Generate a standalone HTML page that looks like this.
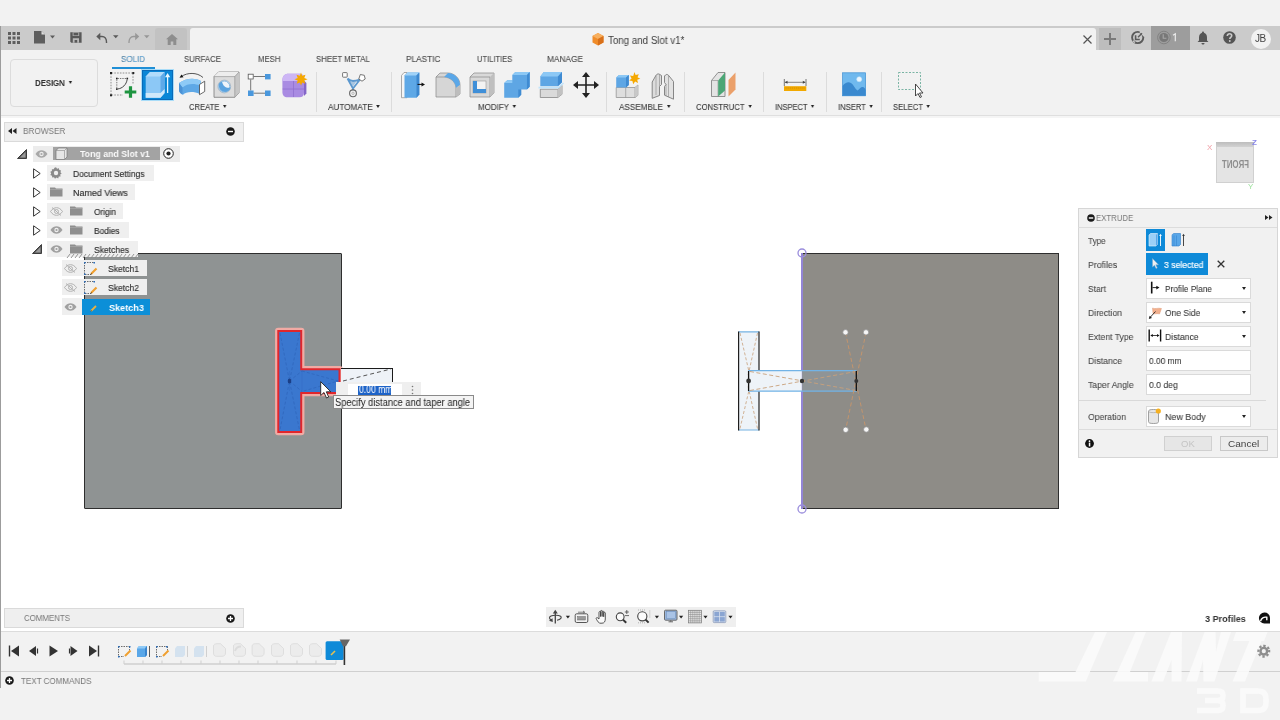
<!DOCTYPE html>
<html><head><meta charset="utf-8">
<style>
*{margin:0;padding:0;box-sizing:border-box}
html,body{width:1280px;height:720px;overflow:hidden;background:#fff;font-family:"Liberation Sans",sans-serif;color:#333}
.a{position:absolute}
.t{position:absolute;white-space:nowrap;line-height:1;will-change:transform}
svg{position:absolute;overflow:visible}
.tab{font-size:9px;color:#4a4a4a;top:55px;-webkit-text-stroke:0.1px #4a4a4a}
.lbl{font-size:9px;color:#3a3a3a;top:103px;-webkit-text-stroke:0.1px #3a3a3a}
.sep{position:absolute;top:72px;width:1px;height:40px;background:#dcdcdc}
.dd{display:inline-block;width:0;height:0;border-left:2.5px solid transparent;border-right:2.5px solid transparent;border-top:3px solid #222;vertical-align:middle;margin-left:4px;position:relative;top:-1px}
.row{position:absolute;height:16px;background:#ececec}
.tl{font-size:9px;color:#2e2e2e;-webkit-text-stroke:0.15px #2e2e2e}
.pl{font-size:9.7px;color:#4a4a4a;-webkit-text-stroke:0.1px #4a4a4a}
.inp{position:absolute;left:1146px;width:105px;height:21px;background:#fff;border:1px solid #dadada}
</style></head><body>
<!-- window top -->
<div class="a" style="left:0;top:0;width:1280px;height:26px;background:#f2f2f2"></div>
<div class="a" style="left:0;top:26px;width:1280px;height:24px;background:#cbcbcb"></div>
<div class="a" style="left:155px;top:28px;width:32px;height:22px;background:#c2c2c2;border-radius:3px 3px 0 0"></div>
<div class="a" style="left:190px;top:28px;width:906px;height:22px;background:#f2f2f2;border-radius:3px 3px 0 0"></div>
<div class="a" style="left:1099px;top:28px;width:22px;height:22px;background:#bdbdbd"></div>
<div class="a" style="left:1151px;top:26px;width:39px;height:24px;background:#9d9d9d"></div>
<!-- toolbar -->
<div class="a" style="left:0;top:50px;width:1280px;height:66px;background:#f2f2f2;border-bottom:1px solid #dfdfdf"></div>
<div class="a" style="left:0;top:116px;width:1280px;height:2px;background:#f5f5f5"></div>
<!-- left border -->
<div class="a" style="left:0;top:26px;width:1.2px;height:662px;background:#9c9c9c"></div>
<!-- grid icon -->
<svg style="left:8px;top:32px" width="12" height="12" viewBox="0 0 12 12">
<g fill="#5e5e5e"><rect x="0" y="0" width="3" height="3"/><rect x="4.5" y="0" width="3" height="3"/><rect x="9" y="0" width="3" height="3"/>
<rect x="0" y="4.5" width="3" height="3"/><rect x="4.5" y="4.5" width="3" height="3"/><rect x="9" y="4.5" width="3" height="3"/>
<rect x="0" y="9" width="3" height="3"/><rect x="4.5" y="9" width="3" height="3"/><rect x="9" y="9" width="3" height="3"/></g></svg>
<!-- file icon -->
<svg style="left:34px;top:31px" width="24" height="13" viewBox="0 0 24 13">
<path d="M0 0H7.5L11 3.5V12.5H0Z" fill="#5e5e5e"/><path d="M7.5 0L11 3.5H7.5Z" fill="#e0e0e0"/>
<path d="M16 4.5H21L18.5 7.5Z" fill="#5e5e5e"/></svg>
<!-- save -->
<svg style="left:70px;top:32px" width="12" height="11" viewBox="0 0 12 11">
<path d="M0.3 0.2H11.6V10.8H1.3L0.3 9.8Z" fill="#585858"/><rect x="2.6" y="0.2" width="6.6" height="3.8" fill="#a9a9a9"/><rect x="3.6" y="0.9" width="4.6" height="2.4" fill="#585858"/>
<path d="M2.8 10.8V6.2H9V10.8H7.2V8H4.6V10.8Z" fill="#b9b9b9"/></svg>
<!-- undo -->
<svg style="left:96px;top:32px" width="24" height="12" viewBox="0 0 24 12">
<path d="M2.5 4.5H6C8.8 4.5 10.5 6.8 10.5 10V11" fill="none" stroke="#5a5a5a" stroke-width="1.4"/><path d="M0.3 4.5L4.3 0.8V8.2Z" fill="#5a5a5a"/>
<path d="M17 3.2H22.5L19.75 6.2Z" fill="#5a5a5a"/></svg>
<!-- redo -->
<svg style="left:128px;top:32px" width="24" height="12" viewBox="0 0 24 12">
<path d="M9 4.5H5.5C2.7 4.5 1 6.8 1 10V11" fill="none" stroke="#979797" stroke-width="1.3"/><path d="M11.2 4.5L7.2 0.8V8.2Z" fill="#979797"/>
<path d="M16 3.2H21.5L18.75 6.2Z" fill="#979797"/></svg>
<!-- home -->
<svg style="left:166px;top:34px" width="12" height="11" viewBox="0 0 12 11">
<path d="M6 0L12 5.3H10.3V11H7.3V7.5H4.7V11H1.7V5.3H0Z" fill="#8e8e8e"/></svg>
<!-- title -->
<svg style="left:592px;top:33px" width="12" height="13" viewBox="0 0 12 13">
<path d="M6 0L11.5 3V9.5L6 12.5L0.5 9.5V3Z" fill="#f08c2a"/><path d="M6 0L11.5 3L6 6L0.5 3Z" fill="#f7b060"/><path d="M6 6L11.5 3V9.5L6 12.5Z" fill="#d8701a"/></svg>
<div class="t" style="transform:scaleX(0.9744);transform-origin:0 0;left:608.00px;top:36px;font-size:10px;color:#3c3c3c">Tong and Slot v1*</div>
<!-- close x -->
<svg style="left:1083px;top:35px" width="9" height="9" viewBox="0 0 9 9"><path d="M0.5 0.5L8.5 8.5M8.5 0.5L0.5 8.5" stroke="#555" stroke-width="1.2"/></svg>
<!-- plus -->
<svg style="left:1104px;top:33px" width="12" height="12" viewBox="0 0 12 12"><path d="M6 0V12M0 6H12" stroke="#7a7a7a" stroke-width="2"/></svg>
<!-- refresh/jobs -->
<svg style="left:1129px;top:29px" width="18" height="18" viewBox="1129 29 18 18"><circle cx="1137.7" cy="37.5" r="5.6" fill="none" stroke="#5a5a5a" stroke-width="1.9"/><path d="M1140.2 31.2L1145 36" stroke="#cdcdcd" stroke-width="2.6"/><path d="M1133 40.6L1134.8 42.6" stroke="#cdcdcd" stroke-width="1.4"/><path d="M1142 33.2L1138 37.2" stroke="#5a5a5a" stroke-width="1.5"/><path d="M1135.6 35.3V39.5H1139.8" fill="none" stroke="#5a5a5a" stroke-width="1.6"/></svg>
<!-- clock -->
<svg style="left:1155px;top:29px" width="18" height="18" viewBox="1155 29 18 18"><circle cx="1163.9" cy="37.5" r="6.3" fill="none" stroke="#838383" stroke-width="1"/><circle cx="1163.9" cy="37.5" r="4.6" fill="#787878"/><path d="M1163.2 34.3V38.2H1166.4" fill="none" stroke="#a8a8a8" stroke-width="1.1"/></svg>
<svg style="left:1172px;top:33px" width="6" height="9" viewBox="0 0 6 9"><path d="M1 2.2L3.3 0.8V8.2" fill="none" stroke="#ececec" stroke-width="1.2"/></svg>
<!-- bell -->
<svg style="left:1197px;top:31px" width="12" height="14" viewBox="0 0 12 14"><path d="M6 0.5C6.8 0.5 7 1.2 7 1.8C9 2.4 10 4 10 6.5V9.5L11.5 11H0.5L2 9.5V6.5C2 4 3 2.4 5 1.8C5 1.2 5.2 0.5 6 0.5Z" fill="#555"/><path d="M4.5 12H7.5C7.5 13 6.8 13.5 6 13.5C5.2 13.5 4.5 13 4.5 12Z" fill="#555"/></svg>
<!-- help -->
<svg style="left:1223px;top:31px" width="13" height="13" viewBox="0 0 13 13"><circle cx="6.5" cy="6.5" r="6.3" fill="#555"/><path d="M4.3 5C4.3 3.6 5.3 2.8 6.5 2.8C7.8 2.8 8.7 3.6 8.7 4.8C8.7 6.3 6.8 6.4 6.8 7.9" fill="none" stroke="#cbcbcb" stroke-width="1.6"/><circle cx="6.8" cy="10" r="0.95" fill="#cbcbcb"/></svg>
<!-- JB -->
<div class="a" style="left:1251px;top:29px;width:20px;height:20px;border-radius:50%;background:#f2f2f2"></div>
<div class="t" style="left:1255px;top:34px;font-size:10px;color:#444;letter-spacing:-0.5px">JB</div>

<!-- DESIGN -->
<div class="a" style="left:10px;top:59px;width:88px;height:48px;border:1px solid #dcdcdc;border-radius:4px;background:#f2f2f2"></div>
<div class="t" style="transform:scaleX(0.8429);transform-origin:0 0;left:35.00px;top:78px;font-size:9.5px;font-weight:bold;color:#333;letter-spacing:-0.2px">DESIGN<span class="dd" style="margin-left:5px"></span></div>
<!-- tabs -->
<div class="t tab" style="transform:scaleX(0.8889);transform-origin:0 0;left:121.00px;color:#5aa3d6">SOLID</div>
<div class="a" style="left:112px;top:67px;width:43px;height:2px;background:#1f8fd6"></div>
<div class="t tab" style="transform:scaleX(0.8690);transform-origin:0 0;left:183.50px">SURFACE</div>
<div class="t tab" style="transform:scaleX(0.8654);transform-origin:0 0;left:257.50px">MESH</div>
<div class="t tab" style="transform:scaleX(0.8710);transform-origin:0 0;left:316.00px">SHEET METAL</div>
<div class="t tab" style="transform:scaleX(0.9189);transform-origin:0 0;left:406.00px">PLASTIC</div>
<div class="t tab" style="transform:scaleX(0.8393);transform-origin:0 0;left:476.75px">UTILITIES</div>
<div class="t tab" style="transform:scaleX(0.9231);transform-origin:0 0;left:547.00px">MANAGE</div>
<!-- group labels -->
<div class="t lbl" style="transform:scaleX(0.8500);transform-origin:0 0;left:189.00px">CREATE<span class="dd"></span></div>
<div class="t lbl" style="transform:scaleX(0.9082);transform-origin:0 0;left:328.00px">AUTOMATE<span class="dd"></span></div>
<div class="t lbl" style="transform:scaleX(0.8857);transform-origin:0 0;left:478.00px">MODIFY<span class="dd"></span></div>
<div class="t lbl" style="transform:scaleX(0.9042);transform-origin:0 0;left:619.10px">ASSEMBLE<span class="dd"></span></div>
<div class="t lbl" style="transform:scaleX(0.8596);transform-origin:0 0;left:695.50px">CONSTRUCT<span class="dd"></span></div>
<div class="t lbl" style="transform:scaleX(0.8333);transform-origin:0 0;left:774.50px">INSPECT<span class="dd"></span></div>
<div class="t lbl" style="transform:scaleX(0.8485);transform-origin:0 0;left:837.50px">INSERT<span class="dd"></span></div>
<div class="t lbl" style="transform:scaleX(0.8571);transform-origin:0 0;left:893.00px">SELECT<span class="dd"></span></div>
<!-- separators -->
<div class="sep" style="left:316px"></div>
<div class="sep" style="left:391px"></div>
<div class="sep" style="left:606px"></div>
<div class="sep" style="left:684px"></div>
<div class="sep" style="left:763px"></div>
<div class="sep" style="left:826px"></div>
<div class="sep" style="left:881px"></div>
<!-- icons -->
<!-- sketch -->
<svg style="left:110px;top:72px" width="26" height="25" viewBox="0 0 26 25">
<path d="M1.5 1H23.5M1 1.5V23M1.5 23H13M23 1.5V12" fill="none" stroke="#666" stroke-width="0.7" stroke-dasharray="1.6 1.2"/>
<g fill="#222"><rect x="0" y="0" width="2" height="2"/><rect x="22.3" y="0" width="2" height="2"/><rect x="0" y="22.3" width="2" height="2"/>
<rect x="6" y="5.7" width="1.6" height="1.6"/><rect x="16.5" y="5.7" width="1.6" height="1.6"/><rect x="6" y="16.3" width="1.6" height="1.6"/></g>
<path d="M7.5 6.5H16.5M6.8 7.5V16.3" fill="none" stroke="#444" stroke-width="0.7" stroke-dasharray="1.4 1"/>
<path d="M7.5 17C12.5 16.5 16.5 12.5 17.2 7.3" fill="none" stroke="#333" stroke-width="0.9"/>
<path d="M20.5 14.2V25.8M14.7 20H26.3" stroke="#1e9440" stroke-width="3.2"/></svg>
<!-- extrude (active) -->
<div class="a" style="left:142px;top:69.5px;width:31px;height:30.5px;background:#0a86d6;border:1.2px solid #0b6ab8;box-shadow:0 0 0 1px #a8dcf8"></div>
<svg style="left:140px;top:66px" width="36" height="36" viewBox="140 66 36 36">
<path d="M145.7 76.5L150 72H164.6V93L160.5 97.7H145.7Z" fill="#8cc8f6"/>
<path d="M145.7 76.5L150 72H164.6L160.5 76.5Z" fill="#b2dcfb"/>
<path d="M160.5 76.5L164.6 72V93L160.5 97.7Z" fill="#5ea9e8"/>
<path d="M145.7 93H160.5L164.6 89V93L160.5 97.7H145.7Z" fill="#cfe8fa"/>
<path d="M167.6 93V76" stroke="#e8f6ff" stroke-width="1.3"/><path d="M167.6 73L165 77.3H170.2Z" fill="#e8f6ff"/>
</svg>
<!-- revolve -->
<svg style="left:176px;top:70px" width="32" height="28" viewBox="176 70 32 28">
<path d="M181.5 76.5C187 72.5 197 72 203 77.5" fill="none" stroke="#444" stroke-width="0.9"/><path d="M179.5 77.8L181.5 74.5L183.5 77.2Z" fill="#111"/>
<path d="M179 83C186 78 195 77.5 201 81L199.5 94C194 91 186 91.5 183 94.7C180.5 93.5 179 92 179 90Z" fill="#5ea8e6"/>
<path d="M179 83C186 78 195 77.5 201 81L200 85.5C194 83 187 83.5 182.5 87.5Z" fill="#8ecaf6"/>
<path d="M179 83L182.5 87.5V94.7C180.5 93.5 179 92 179 90Z" fill="#4b92d6"/>
<path d="M199.5 84.5L204.7 81.2V91.5L199.5 94.7Z" fill="#fff" stroke="#444" stroke-width="0.8"/>
</svg>
<!-- hole -->
<svg style="left:210px;top:70px" width="32" height="30" viewBox="210 70 32 30">
<path d="M214 76.6L218.5 72H239V92.8L234.8 97.3H214Z" fill="#dcdcdc" stroke="#7a7a7a" stroke-width="0.8"/>
<path d="M214 76.6L218.5 72H239L234.8 76.6Z" fill="#ededed"/>
<path d="M234.8 76.6L239 72V92.8L234.8 97.3Z" fill="#c6c6c6"/>
<path d="M214 76.6H234.8V97.3M234.8 76.6L239 72" fill="none" stroke="#8a8a8a" stroke-width="0.6"/>
<circle cx="224.3" cy="86.5" r="6.4" fill="#eef4fa" stroke="#9aaabb" stroke-width="0.7"/>
<path d="M218.8 84.5C218.5 89 221.5 92 225 92C228.5 92 230.3 89.8 230.5 87.5C227 88.5 223 87 222 81.5C220 82 219 83 218.8 84.5Z" fill="#5aa3e0"/>
<circle cx="224.3" cy="86.5" r="5.5" fill="none" stroke="#6aa9dc" stroke-width="0.8"/>
</svg>
<!-- rect pattern -->
<svg style="left:247px;top:73px" width="25" height="25" viewBox="0 0 25 25">
<path d="M6.5 3.5H18M3.7 6.5V17.5M6.5 20.2H18" stroke="#555" stroke-width="0.8"/>
<rect x="1.2" y="1.2" width="5" height="4.8" fill="#fff" stroke="#555" stroke-width="0.8"/>
<rect x="18" y="1" width="5.6" height="5.4" fill="#4a98dd"/><rect x="1" y="17.5" width="5.6" height="5.5" fill="#4a98dd"/><rect x="18" y="17.5" width="5.6" height="5.5" fill="#4a98dd"/></svg>
<!-- form -->
<svg style="left:280px;top:70px" width="32" height="30" viewBox="280 70 32 30">
<path d="M282.4 80C282.4 76 284.5 73.7 288.5 73.7H299C302.5 73.7 304 75.5 304 79V93C304 95.8 302.2 97.3 299.5 97.3H287.5C284.2 97.3 282.4 95.3 282.4 92Z" fill="#a98be2"/>
<path d="M282.4 80C282.4 76 284.5 73.7 288.5 73.7H299C302.5 73.7 304 75.5 304 79V81H282.4Z" fill="#cdb6f5"/>
<path d="M293.5 81V97M282.6 89H304" stroke="#9070d0" stroke-width="0.8"/>
<path d="M304 80.5L306.4 83V93.5L304 96Z" fill="#8566c8"/>
<path d="M301 72.5L302.2 75.8L305.5 74.8L304.3 78L307.6 79.3L304.3 80.5L305.3 83.8L302.2 82.6L301 85.8L299.8 82.6L296.7 83.8L297.7 80.5L294.4 79.3L297.7 78L296.5 74.8L299.8 75.8Z" fill="#f5a800"/>
</svg>
<!-- automate -->
<svg style="left:338px;top:68px" width="32" height="32" viewBox="338 68 32 32">
<path d="M347.5 78.5C350 80.5 351 81 353 81C355 81 357 80.5 360 79.5M347.5 78.5L353 88.5L360 79.5M353 88.5V91" fill="none" stroke="#5b98cf" stroke-width="1.8" stroke-linejoin="round"/>
<path d="M350 81.5L356.5 81.2L353 86.5Z" fill="#5b98cf" opacity="0.5"/>
<rect x="342.6" y="72.6" width="4.6" height="4.6" rx="0.6" fill="#fff" stroke="#666" stroke-width="0.9"/>
<path d="M360.3 74.5L364.3 75.3L365.2 79L362 81.2L358.8 79Z" fill="#fff" stroke="#666" stroke-width="0.9"/>
<circle cx="353" cy="93.3" r="3.4" fill="#f2f2f2" stroke="#666" stroke-width="1.1"/><circle cx="353" cy="93.3" r="1.2" fill="none" stroke="#888" stroke-width="0.5"/>
</svg>
<!-- press pull -->
<svg style="left:398px;top:68px" width="30" height="32" viewBox="398 68 30 32">
<path d="M401.5 75.5L404 72.5H407V97.7H401.5Z" fill="#f5f5f5" stroke="#8a8a8a" stroke-width="0.7"/>
<path d="M404.5 75.5L407.5 72.5H419.3V94.5L416.5 97.7H404.5Z" fill="#5ea8e6"/>
<path d="M404.5 75.5L407.5 72.5H419.3L416.5 75.5Z" fill="#9fd2f8"/>
<path d="M416.5 75.5L419.3 72.5V94.5L416.5 97.7Z" fill="#3d88cf"/>
<path d="M417.5 84.4H422" stroke="#111" stroke-width="1"/><path d="M425 84.4L421.5 82.4V86.4Z" fill="#111"/>
</svg>
<!-- fillet -->
<svg style="left:435px;top:72px" width="27" height="26" viewBox="0 0 27 26">
<path d="M1 5L5 1H13C19 1 25 6 25 13V22L21 25H1Z" fill="#d6d6d6" stroke="#888" stroke-width="0.7"/>
<path d="M1 5H9C15 5 21 10 21 16V25" fill="none" stroke="#888" stroke-width="0.7"/>
<path d="M9 5C15 5 21 10 21 16L25 13C25 6 19 1 13 1Z" fill="#5aa7e8"/><path d="M21 16V25L25 22V13Z" fill="#bdbdbd"/></svg>
<!-- shell -->
<svg style="left:469px;top:72px" width="27" height="26" viewBox="0 0 27 26">
<path d="M1 5L5 1H25V21L21 25H1Z" fill="#d9d9d9" stroke="#888" stroke-width="0.7"/><path d="M1 5H21V25" fill="none" stroke="#888" stroke-width="0.7"/>
<path d="M21 5L25 1V21L21 25Z" fill="#bfbfbf"/>
<rect x="4" y="9" width="13" height="12" fill="#f3f3f3" stroke="#999" stroke-width="0.6"/>
<path d="M4 9H8V17H17V21H4Z" fill="#3f8fd8"/></svg>
<!-- combine -->
<svg style="left:502px;top:70px" width="30" height="30" viewBox="502 70 30 30">
<path d="M504.2 83L507.3 80.2H512.3V75L515.3 72.1H529.7V86.7L526.9 89.5H521.2V94.7L518.3 97.7H504.2Z" fill="#5ea6e4"/>
<path d="M512.3 75L515.3 72.1H529.7L527 75Z" fill="#8cc8f5"/><path d="M504.2 83L507.3 80.2H512.3V83Z" fill="#8cc8f5"/>
<path d="M527 75L529.7 72.1V86.7L526.9 89.5Z" fill="#3f8bd2"/><path d="M518.3 89.5H521.2V94.7L518.3 97.7Z" fill="#3f8bd2"/>
</svg>
<!-- split -->
<svg style="left:536px;top:70px" width="30" height="30" viewBox="536 70 30 30">
<path d="M540.3 89.2H557.8L562 85.3V94.3L557.8 97.5H540.3Z" fill="#dadada" stroke="#7a7a7a" stroke-width="0.7"/><path d="M557.8 89.2V97.5" stroke="#9a9a9a" stroke-width="0.6"/><path d="M557.8 89.2L562 85.3V94.3L557.8 97.5Z" fill="#c2c2c2"/>
<path d="M540.3 76.5L543.8 72.1H562V82.3L557.8 86.2H540.3Z" fill="#5ea6e4"/><path d="M540.3 76.5L543.8 72.1H562L558 76.5Z" fill="#8cc8f5"/><path d="M558 76.5L562 72.1V82.3L557.8 86.2Z" fill="#3f8bd2"/>
<path d="M538.5 87.6H558.3L563.5 83" fill="none" stroke="#bfe3fb" stroke-width="1.6"/>
</svg>
<!-- move -->
<svg style="left:573px;top:72px" width="26" height="26" viewBox="0 0 26 26">
<path d="M13 3V23M3 13H23" stroke="#222" stroke-width="1.6"/>
<path d="M13 0L9 5H17ZM13 26L9 21H17ZM0 13L5 9V17ZM26 13L21 9V17Z" fill="#222"/></svg>
<!-- new component -->
<svg style="left:612px;top:70px" width="32" height="30" viewBox="612 70 32 30">
<path d="M616.2 87.5H635L637.9 85V95.3L635.2 97.5H616.2Z" fill="#dedede" stroke="#8a8a8a" stroke-width="0.7"/><path d="M625.7 87.5V97.5M635 87.5V97.5" stroke="#8a8a8a" stroke-width="0.6"/><path d="M635 87.5L637.9 85V95.3L635.2 97.5Z" fill="#c8c8c8"/>
<path d="M616.2 77.5L619 75H628.8V85L626 87.5H616.2Z" fill="#5ea6e4"/><path d="M616.2 77.5L619 75H628.8L626 77.5Z" fill="#8cc8f5"/><path d="M626 77.5L628.8 75V85L626 87.5Z" fill="#3f8bd2"/>
<path d="M634.5 72L635.6 75L638.8 74.2L637.5 77.2L640.3 78.8L637.2 79.8L638 83L635.1 81.5L633.2 84.2L632.4 81L629.2 80.6L631.6 78.5L630 75.6L633.2 76Z" fill="#f5a800"/>
</svg>
<!-- joint -->
<svg style="left:650px;top:70px" width="28" height="30" viewBox="650 70 28 30">
<path d="M652.2 82L656 75.3C656.8 74 658.5 73.5 659.5 74.3L661.5 75.5V84.5L659.5 86.5V95.5L652.2 98.3Z" fill="#dcdcdc" stroke="#7a7a7a" stroke-width="0.9" stroke-linejoin="round"/>
<path d="M656 75.3V95M659.5 74.3V86.5" stroke="#8a8a8a" stroke-width="0.6"/>
<path d="M673.5 81.5L668.5 75.3C667.6 74.3 666.3 74.2 665.5 75L664.5 76V82.5L666 84.5L664.5 86.5V95.2L673.5 99.2Z" fill="#e2e2e2" stroke="#7a7a7a" stroke-width="0.9" stroke-linejoin="round"/>
<path d="M668.5 75.3V97M666 84.5V96" stroke="#8a8a8a" stroke-width="0.6"/>
</svg>
<!-- construct -->
<svg style="left:708px;top:70px" width="30" height="30" viewBox="708 70 30 30">
<path d="M711.5 80.5L718 72.5H725V96.5H711.5Z" fill="#e4e4e4" stroke="#7a7a7a" stroke-width="0.8"/>
<path d="M711.5 80.5H718V96.5" fill="none" stroke="#8a8a8a" stroke-width="0.6"/>
<path d="M718.2 80.5L725 72.5V90.5L718.2 96.5Z" fill="#4ca676"/>
<path d="M728.5 80L735.5 72.5V89.5L728.5 96.5Z" fill="#eba06a"/>
</svg>
<!-- inspect -->
<svg style="left:782px;top:78px" width="26" height="16" viewBox="782 78 26 16">
<path d="M784.3 79V86M806 79V86" stroke="#666" stroke-width="0.9"/><path d="M785 82.3H805.3" stroke="#777" stroke-width="0.9"/>
<path d="M784.8 82.3L787.5 80.8V83.8ZM805.5 82.3L802.8 80.8V83.8Z" fill="#444"/>
<rect x="784" y="86.2" width="22.3" height="4.8" fill="#f2a900"/><path d="M785.5 88H805" stroke="#c27f00" stroke-width="0.6" stroke-dasharray="1.2 0.9"/></svg>
<!-- insert -->
<svg style="left:840px;top:70px" width="28" height="28" viewBox="840 70 28 28">
<rect x="842.6" y="72.8" width="23" height="23" fill="#70b9ee" stroke="#3f8fd2" stroke-width="0.7"/>
<path d="M842.6 95.8V86C845 82.5 848.5 81.5 851 83C853.5 84.5 855 89 857.5 90.5C859.5 89 861 86.5 863 87C864.5 87.5 865.3 89 865.6 90V95.8Z" fill="#3a89cf"/>
<circle cx="859.2" cy="79.2" r="2.5" fill="#eaf6ff" stroke="#bfe0f7" stroke-width="0.5"/>
</svg>
<!-- select -->
<svg style="left:898px;top:72px" width="27" height="26" viewBox="0 0 27 26">
<rect x="0.5" y="0.5" width="22" height="17" fill="none" stroke="#5aa38f" stroke-width="0.8" stroke-dasharray="2 1.5"/>
<path d="M17.5 12V24L20 21.5L22 25.5L23.5 24.8L21.5 21H25Z" fill="#fff" stroke="#333" stroke-width="0.9"/></svg>

<!-- left body -->
<div class="a" style="left:84px;top:253px;width:258px;height:256px;background:#8f9393;border:1.5px solid #2e2e2e;border-radius:1px"></div>
<!-- right body -->
<div class="a" style="left:802px;top:253px;width:257px;height:256px;background:#8e8c87;border:1.5px solid #2e2e2e;border-left:none"></div>
<div class="a" style="left:801px;top:253px;width:1.5px;height:256px;background:#9385d6"></div>
<svg style="left:796px;top:247px" width="12" height="12" viewBox="0 0 12 12"><circle cx="6" cy="6" r="4" fill="none" stroke="#9a8ddc" stroke-width="1.3"/></svg>
<svg style="left:796px;top:503px" width="12" height="12" viewBox="0 0 12 12"><circle cx="6" cy="6" r="4" fill="none" stroke="#9a8ddc" stroke-width="1.3"/></svg>
<!-- T profile -->
<svg style="left:270px;top:322px" width="80" height="120" viewBox="270 322 80 120">
<path d="M278.3 331H301.2V369.3H339.5V393.1H301.2V432H278.3Z" fill="#3a77cf" stroke="#f1aaa4" stroke-width="6.5" stroke-linejoin="round"/>
<path d="M278.3 331H301.2V369.3H339.5V393.1H301.2V432H278.3Z" fill="#3a77cf" stroke="#e0262c" stroke-width="2"/>
<g stroke="#2a5cb0" stroke-width="0.7" stroke-dasharray="3 2" fill="none" opacity="0.7">
<path d="M280 333L289.5 381L280 430M299.5 333L289.5 381L299.5 430"/>
<path d="M302 371L338 381L302 391.5M289.5 381L302 371M289.5 381L302 391.5"/>
</g>
<path d="M289.5 371V391M302 370.5V392" stroke="#3068bf" stroke-width="0.8" opacity="0.5"/>
<ellipse cx="289.5" cy="381" rx="1.8" ry="2.6" fill="#1b3f86"/>
</svg>
<!-- preview box -->
<div class="a" style="left:341px;top:367.5px;width:52px;height:28px;background:#eef2f7;border-top:1.3px solid #1b1b1b;border-right:1.3px solid #1b1b1b"></div>
<svg style="left:340px;top:366px" width="55" height="20" viewBox="340 366 55 20"><path d="M343 381L391 369" stroke="#555" stroke-width="1" stroke-dasharray="4 3"/></svg>
<!-- input widget -->
<div class="a" style="left:336px;top:382px;width:85px;height:13px;background:#efefef"></div>
<div class="a" style="left:347.5px;top:383.5px;width:54px;height:12px;background:#fff"></div>
<div class="a" style="left:358px;top:385.5px;width:33px;height:9.5px;background:#1d63c8"></div>
<div class="a" style="left:358.5px;top:384.5px;font-size:10px;line-height:1;white-space:nowrap;color:#fff;transform:scaleX(0.86);transform-origin:0 0;will-change:transform">0.00 mm</div>
<svg style="left:411px;top:385px" width="3" height="10" viewBox="0 0 3 10"><circle cx="1.5" cy="1.5" r="0.8" fill="#777"/><circle cx="1.5" cy="5" r="0.8" fill="#777"/><circle cx="1.5" cy="8.5" r="0.8" fill="#777"/></svg>
<!-- cursor -->
<svg style="left:320px;top:381px" width="12" height="18" viewBox="0 0 12 18"><path d="M0.7 0.7V14.5L4 11.5L6.5 17L8.7 16L6.3 10.8H10.8Z" fill="#fff" stroke="#222" stroke-width="0.9"/></svg>
<!-- tooltip -->
<div class="a" style="left:333px;top:394.5px;width:141px;height:14px;background:#f4f4f4;border:1px solid #8a8a8a"></div>
<div class="t" style="transform:scaleX(0.9310);transform-origin:0 0;left:335.13px;top:398px;font-size:10px;color:#222">Specify distance and taper angle</div>
<!-- right sketch -->
<svg style="left:730px;top:320px" width="150" height="120" viewBox="730 320 150 120">
<rect x="738.6" y="331.8" width="20.4" height="98" fill="#eef3f8"/>
<path d="M738.5 331.8H759.2M738.5 430H759.2" stroke="#74b2e2" stroke-width="1.2"/>
<path d="M738.6 331.5V430.5M759 331.5V430.5" stroke="#1e1e1e" stroke-width="1.2"/>
<path d="M740 333L750 376M757.5 333L748 376M740 428.5L750 386M757.5 428.5L748 386" stroke="#c8a07a" stroke-width="0.8" stroke-dasharray="3 2"/>
<rect x="748.3" y="370.5" width="53.5" height="20.8" fill="#eef3f8"/>
<rect x="802" y="370.5" width="54.5" height="20.8" fill="#8f9598" opacity="0.9"/>
<path d="M748.3 370.6H856.5M748.3 391.2H856.5" stroke="#72b3e6" stroke-width="1.3"/>
<path d="M750 371.5L856 390.5M750 390.5L856 371.5" stroke="#c8a07a" stroke-width="0.9" stroke-dasharray="4 2.5"/>
<path d="M845.5 332.5L866 429.5M866 332.5L845.7 429.5" stroke="#c8956a" stroke-width="0.9" stroke-dasharray="4 2.5"/>
<path d="M748.6 371V391M856.3 371V391" stroke="#111" stroke-width="1.3"/>
<circle cx="748.6" cy="381" r="2.4" fill="#333"/>
<circle cx="802" cy="381" r="2.2" fill="#333"/>
<circle cx="856.3" cy="381" r="2" fill="#333"/>
<g fill="#f6f6f6" stroke="#8a8a8a" stroke-width="0.7"><circle cx="845.5" cy="332.3" r="2.7"/><circle cx="866" cy="332.3" r="2.7"/><circle cx="845.7" cy="429.8" r="2.7"/><circle cx="866.3" cy="429.5" r="2.7"/></g>
</svg>
<!-- view cube -->
<div class="a" style="left:1216px;top:142px;width:38px;height:41px;background:#e4e4e4;border:1px solid #d0d0d0"></div>
<div class="a" style="left:1216px;top:142px;width:38px;height:4.5px;background:linear-gradient(#bdbdbd,#d2d2d2)"></div>
<svg style="left:1216px;top:142px;will-change:transform" width="38" height="41" viewBox="0 0 38 41"><text x="-19.5" y="26" transform="scale(-1,1)" text-anchor="middle" font-family="Liberation Sans" font-weight="bold" font-size="10" fill="#8e8e8e" textLength="27" lengthAdjust="spacingAndGlyphs">FRONT</text></svg>
<div class="t" style="left:1207px;top:144px;font-size:8px;color:#f0a0a8">X</div>
<div class="t" style="left:1252px;top:139px;font-size:8px;font-weight:bold;color:#8a88e8">Z</div>
<div class="t" style="left:1248px;top:183px;font-size:8px;color:#9be09b">Y</div>

<!-- browser header -->
<div class="a" style="left:4px;top:122px;width:240px;height:20px;background:#efefef;border:1px solid #dadada"></div>
<svg style="left:8px;top:128px" width="9" height="6" viewBox="0 0 9 6"><path d="M0 3L4 0V6ZM4.5 3L8.5 0V6Z" fill="#222"/></svg>
<div class="t" style="transform:scaleX(0.9111);transform-origin:0 0;left:23.09px;top:127px;font-size:9px;color:#777">BROWSER</div>
<svg style="left:226px;top:127px" width="9" height="9" viewBox="0 0 9 9"><circle cx="4.5" cy="4.5" r="4.3" fill="#1a1a1a"/><rect x="2" y="3.8" width="5" height="1.4" fill="#fff"/></svg>
<!-- row: root -->
<div class="row" style="left:33px;top:146px;width:147px;height:16px;background:#ececec"></div>
<svg style="left:17px;top:149px" width="10" height="10" viewBox="0 0 10 10"><path d="M0.5 9.5L9.5 0.5V9.5Z" fill="#555" stroke="#222" stroke-width="0.8"/><path d="M3 8.5L8.5 3V8.5Z" fill="#9a9a9a"/></svg>
<svg style="left:35px;top:150px" width="13" height="8" viewBox="0 0 13 8"><path d="M0.5 4C2.5 1 4.5 0.3 6.5 0.3C8.5 0.3 10.5 1 12.5 4C10.5 7 8.5 7.7 6.5 7.7C4.5 7.7 2.5 7 0.5 4Z" fill="#a8a8a8"/><circle cx="6.5" cy="4" r="2.2" fill="#ececec"/><circle cx="6.5" cy="4" r="1.1" fill="#a8a8a8"/></svg>
<div class="a" style="left:53px;top:147px;width:107px;height:13px;background:#a3a3a3"></div>
<svg style="left:55px;top:147px" width="13" height="13" viewBox="0 0 13 13"><path d="M1 3.5L3.5 1H12V10L9.5 12.5H1Z" fill="#e6e6e6" stroke="#777" stroke-width="0.7"/><path d="M1 3.5H9.5V12.5M9.5 3.5L12 1" fill="none" stroke="#888" stroke-width="0.6"/></svg>
<div class="t" style="transform:scaleX(0.9211);transform-origin:0 0;left:80.00px;top:149px;font-size:9.5px;font-weight:bold;color:#fbfbfb">Tong and Slot v1</div>
<svg style="left:163px;top:148px" width="11" height="11" viewBox="0 0 11 11"><circle cx="5.5" cy="5.5" r="4.8" fill="#fff" stroke="#222" stroke-width="1"/><circle cx="5.5" cy="5.5" r="2.1" fill="#222"/></svg>
<!-- generic tri outline -->
<svg style="left:33px;top:168px" width="8" height="11" viewBox="0 0 8 11"><path d="M0.6 0.8L7.2 5.5L0.6 10.2Z" fill="#fff" stroke="#333" stroke-width="1"/></svg>
<svg style="left:33px;top:187px" width="8" height="11" viewBox="0 0 8 11"><path d="M0.6 0.8L7.2 5.5L0.6 10.2Z" fill="#fff" stroke="#333" stroke-width="1"/></svg>
<svg style="left:33px;top:206px" width="8" height="11" viewBox="0 0 8 11"><path d="M0.6 0.8L7.2 5.5L0.6 10.2Z" fill="#fff" stroke="#333" stroke-width="1"/></svg>
<svg style="left:33px;top:225px" width="8" height="11" viewBox="0 0 8 11"><path d="M0.6 0.8L7.2 5.5L0.6 10.2Z" fill="#fff" stroke="#333" stroke-width="1"/></svg>
<svg style="left:32px;top:244px" width="10" height="10" viewBox="0 0 10 10"><path d="M0.5 9.5L9.5 0.5V9.5Z" fill="#555" stroke="#222" stroke-width="0.8"/><path d="M3 8.5L8.5 3V8.5Z" fill="#9a9a9a"/></svg>
<!-- Document Settings -->
<div class="row" style="left:47px;top:165px;width:107px;background:#efefef"></div>
<svg style="left:50px;top:167px" width="12" height="12" viewBox="0 0 12 12"><path d="M6 0.3L7.1 1.8L8.9 1.2L9.3 3L11.1 3.5L10.4 5.2L11.7 6.5L10.2 7.6L10.6 9.4L8.8 9.6L8.2 11.4L6.5 10.6L5 11.7L4 10.2L2.2 10.5L2 8.7L0.3 8L1.2 6.4L0.3 4.8L1.9 4L1.9 2.2L3.7 2.3L4.5 0.7Z" fill="#8a8a8a"/><circle cx="6" cy="6" r="2.2" fill="#efefef"/></svg>
<div class="t tl" style="transform:scaleX(0.9408);transform-origin:0 0;left:73.03px;top:170px">Document Settings</div>
<!-- Named Views -->
<div class="row" style="left:47px;top:184px;width:88px;background:#efefef"></div>
<svg style="left:50px;top:187px" width="13" height="10" viewBox="0 0 13 10"><path d="M0 0.5H5L6 1.5H12.5V9.5H0Z" fill="#8f8f8f"/><path d="M0 2.5H12.5" stroke="#b5b5b5" stroke-width="0.5"/></svg>
<div class="t tl" style="transform:scaleX(0.9909);transform-origin:0 0;left:73.00px;top:189px">Named Views</div>
<!-- Origin -->
<div class="row" style="left:47px;top:203px;width:76px;background:#efefef"></div>
<svg style="left:50px;top:207px" width="13" height="9" viewBox="0 0 13 9"><path d="M0.5 4.5C2.5 1.5 4.5 0.7 6.5 0.7C8.5 0.7 10.5 1.5 12.5 4.5C10.5 7.5 8.5 8.3 6.5 8.3C4.5 8.3 2.5 7.5 0.5 4.5Z" fill="none" stroke="#ababab" stroke-width="0.9"/><circle cx="6.5" cy="4.5" r="2" fill="none" stroke="#ababab" stroke-width="0.9"/><path d="M2 0.5L11 8.5" stroke="#ababab" stroke-width="0.9"/></svg>
<svg style="left:69.5px;top:206px" width="13" height="10" viewBox="0 0 13 10"><path d="M0 0.5H5L6 1.5H12.5V9.5H0Z" fill="#8f8f8f"/><path d="M0 2.5H12.5" stroke="#b5b5b5" stroke-width="0.5"/></svg>
<div class="t tl" style="transform:scaleX(0.9167);transform-origin:0 0;left:94.00px;top:208px">Origin</div>
<!-- Bodies -->
<div class="row" style="left:47px;top:222px;width:82px;background:#efefef"></div>
<svg style="left:50px;top:226px" width="13" height="8" viewBox="0 0 13 8"><path d="M0.5 4C2.5 1 4.5 0.3 6.5 0.3C8.5 0.3 10.5 1 12.5 4C10.5 7 8.5 7.7 6.5 7.7C4.5 7.7 2.5 7 0.5 4Z" fill="#a0a0a0"/><circle cx="6.5" cy="4" r="2.2" fill="#efefef"/><circle cx="6.5" cy="4" r="1.1" fill="#a0a0a0"/></svg>
<svg style="left:69.5px;top:225px" width="13" height="10" viewBox="0 0 13 10"><path d="M0 0.5H5L6 1.5H12.5V9.5H0Z" fill="#8f8f8f"/><path d="M0 2.5H12.5" stroke="#b5b5b5" stroke-width="0.5"/></svg>
<div class="t tl" style="transform:scaleX(0.9286);transform-origin:0 0;left:94.00px;top:227px">Bodies</div>
<!-- Sketches -->
<div class="row" style="left:47px;top:241px;width:91px;background:#efefef"></div>
<svg style="left:50px;top:245px" width="13" height="8" viewBox="0 0 13 8"><path d="M0.5 4C2.5 1 4.5 0.3 6.5 0.3C8.5 0.3 10.5 1 12.5 4C10.5 7 8.5 7.7 6.5 7.7C4.5 7.7 2.5 7 0.5 4Z" fill="#a0a0a0"/><circle cx="6.5" cy="4" r="2.2" fill="#efefef"/><circle cx="6.5" cy="4" r="1.1" fill="#a0a0a0"/></svg>
<svg style="left:69.5px;top:244px" width="13" height="10" viewBox="0 0 13 10"><path d="M0 0.5H5L6 1.5H12.5V9.5H0Z" fill="#8f8f8f"/><path d="M0 2.5H12.5" stroke="#b5b5b5" stroke-width="0.5"/></svg>
<div class="t tl" style="transform:scaleX(0.9486);transform-origin:0 0;left:94.00px;top:246px">Sketches</div>
<svg style="left:67px;top:254px" width="72" height="4" viewBox="0 0 72 4"><path d="M0 4L3 0M4 4L7 0M8 4L11 0M12 4L15 0M16 4L19 0M20 4L23 0M24 4L27 0M28 4L31 0M32 4L35 0M36 4L39 0M40 4L43 0M44 4L47 0M48 4L51 0M52 4L55 0M56 4L59 0M60 4L63 0M64 4L67 0M68 4L71 0" stroke="#8a8a8a" stroke-width="0.9"/></svg>
<!-- Sketch1 -->
<div class="row" style="left:62px;top:260px;width:85px;background:#efefef"></div>
<svg style="left:64px;top:264px" width="13" height="9" viewBox="0 0 13 9"><path d="M0.5 4.5C2.5 1.5 4.5 0.7 6.5 0.7C8.5 0.7 10.5 1.5 12.5 4.5C10.5 7.5 8.5 8.3 6.5 8.3C4.5 8.3 2.5 7.5 0.5 4.5Z" fill="none" stroke="#ababab" stroke-width="0.9"/><circle cx="6.5" cy="4.5" r="2" fill="none" stroke="#ababab" stroke-width="0.9"/><path d="M2 0.5L11 8.5" stroke="#ababab" stroke-width="0.9"/></svg>
<svg style="left:84px;top:262px" width="14" height="13" viewBox="0 0 14 13"><path d="M0.5 0.5H10.5M0.5 0.5V12.5H7" fill="none" stroke="#333" stroke-width="0.7" stroke-dasharray="1.5 1"/><rect x="0" y="0" width="1.5" height="1.5" fill="#2a6fc0"/><rect x="9.5" y="0" width="1.5" height="1.5" fill="#2a6fc0"/><rect x="0" y="11.5" width="1.5" height="1.5" fill="#2a6fc0"/><path d="M7 12L12.5 6.5" stroke="#f0a030" stroke-width="2.2"/><path d="M6.3 12.7L7.3 11.2L8 12Z" fill="#222"/></svg>
<div class="t tl" style="transform:scaleX(0.9531);transform-origin:0 0;left:108.00px;top:265px">Sketch1</div>
<!-- Sketch2 -->
<div class="row" style="left:62px;top:279px;width:85px;background:#efefef"></div>
<svg style="left:64px;top:283px" width="13" height="9" viewBox="0 0 13 9"><path d="M0.5 4.5C2.5 1.5 4.5 0.7 6.5 0.7C8.5 0.7 10.5 1.5 12.5 4.5C10.5 7.5 8.5 8.3 6.5 8.3C4.5 8.3 2.5 7.5 0.5 4.5Z" fill="none" stroke="#ababab" stroke-width="0.9"/><circle cx="6.5" cy="4.5" r="2" fill="none" stroke="#ababab" stroke-width="0.9"/><path d="M2 0.5L11 8.5" stroke="#ababab" stroke-width="0.9"/></svg>
<svg style="left:84px;top:281px" width="14" height="13" viewBox="0 0 14 13"><path d="M0.5 0.5H10.5M0.5 0.5V12.5H7" fill="none" stroke="#333" stroke-width="0.7" stroke-dasharray="1.5 1"/><rect x="0" y="0" width="1.5" height="1.5" fill="#2a6fc0"/><rect x="9.5" y="0" width="1.5" height="1.5" fill="#2a6fc0"/><rect x="0" y="11.5" width="1.5" height="1.5" fill="#2a6fc0"/><path d="M7 12L12.5 6.5" stroke="#f0a030" stroke-width="2.2"/><path d="M6.3 12.7L7.3 11.2L8 12Z" fill="#222"/></svg>
<div class="t tl" style="transform:scaleX(0.9531);transform-origin:0 0;left:108.00px;top:284px">Sketch2</div>
<!-- Sketch3 -->
<div class="row" style="left:62px;top:298px;width:20px;height:17px;background:#efefef"></div>
<svg style="left:64px;top:303px" width="13" height="8" viewBox="0 0 13 8"><path d="M0.5 4C2.5 1 4.5 0.3 6.5 0.3C8.5 0.3 10.5 1 12.5 4C10.5 7 8.5 7.7 6.5 7.7C4.5 7.7 2.5 7 0.5 4Z" fill="#a0a0a0"/><circle cx="6.5" cy="4" r="2.2" fill="#efefef"/><circle cx="6.5" cy="4" r="1.1" fill="#a0a0a0"/></svg>
<div class="a" style="left:82px;top:299px;width:68px;height:16px;background:#0c8fd8"></div>
<svg style="left:90px;top:305px" width="8" height="7" viewBox="0 0 8 7"><path d="M1 6L6 1" stroke="#e8b040" stroke-width="1.8"/><path d="M0.5 6.5L1.3 5.2L2 6Z" fill="#333"/></svg>
<div class="t" style="transform:scaleX(0.9583);transform-origin:0 0;left:108.70px;top:303px;font-size:9.5px;font-weight:bold;color:#fff">Sketch3</div>

<!-- extrude panel -->
<div class="a" style="left:1077.5px;top:208px;width:200px;height:250px;background:#f1f1f1;border:1px solid #d6d6d6"></div>
<div class="a" style="left:1078px;top:227px;width:199px;height:1px;background:#dcdcdc"></div>
<svg style="left:1087px;top:213.5px" width="8" height="8" viewBox="0 0 8 8"><circle cx="4" cy="4" r="3.8" fill="#1a1a1a"/><rect x="1.8" y="3.3" width="4.4" height="1.4" fill="#fff"/></svg>
<div class="t" style="transform:scaleX(0.8667);transform-origin:0 0;left:1096.30px;top:213.5px;font-size:9px;color:#7a7a7a">EXTRUDE</div>
<svg style="left:1265px;top:215px" width="8" height="5" viewBox="0 0 8 5"><path d="M0 0L3.5 2.5L0 5ZM4 0L7.5 2.5L4 5Z" fill="#222"/></svg>
<div class="t pl" style="transform:scaleX(0.8429);transform-origin:0 0;left:1088.30px;top:236px">Type</div>
<div class="t pl" style="transform:scaleX(0.9031);transform-origin:0 0;left:1088.00px;top:260px">Profiles</div>
<div class="t pl" style="transform:scaleX(0.8762);transform-origin:0 0;left:1088.00px;top:284px">Start</div>
<div class="t pl" style="transform:scaleX(0.8895);transform-origin:0 0;left:1088.00px;top:308px">Direction</div>
<div class="t pl" style="transform:scaleX(0.8922);transform-origin:0 0;left:1088.00px;top:332px">Extent Type</div>
<div class="t pl" style="transform:scaleX(0.9054);transform-origin:0 0;left:1088.00px;top:356px">Distance</div>
<div class="t pl" style="transform:scaleX(0.8941);transform-origin:0 0;left:1088.00px;top:380px">Taper Angle</div>
<div class="t pl" style="transform:scaleX(0.8929);transform-origin:0 0;left:1088.00px;top:412px">Operation</div>
<!-- type buttons -->
<div class="a" style="left:1146px;top:229px;width:18.5px;height:21.5px;background:#0e8ad8"></div>
<svg style="left:1148px;top:233px" width="15" height="14" viewBox="0 0 15 14"><path d="M1 2L2.5 0.5H9.5V11.5L8 13H1Z" fill="#9bd0f7" stroke="#e8f5fd" stroke-width="0.6"/><path d="M8 2L9.5 0.5V11.5L8 13Z" fill="#5aa7e8"/><path d="M12.5 13V2" stroke="#fff" stroke-width="0.9"/><path d="M12.5 0.8L11.2 3H13.8Z" fill="#fff"/></svg>
<svg style="left:1171px;top:233px" width="15" height="14" viewBox="0 0 15 14"><path d="M1 2.5C1 1.5 2 0.5 3 0.5H9.5V11.5L8 13H1Z" fill="#5aa7e8" stroke="#2f7fcc" stroke-width="0.6"/><path d="M3 2.5V13M5.5 2.5V13" stroke="#2f7fcc" stroke-width="0.5"/><path d="M12.5 13V2" stroke="#333" stroke-width="0.9"/><path d="M12.5 0.8L11.2 3H13.8Z" fill="#333"/></svg>
<!-- profiles -->
<div class="a" style="left:1146px;top:253px;width:62px;height:21.5px;background:#0e8ad8"></div>
<svg style="left:1152px;top:258px" width="7" height="11" viewBox="0 0 7 11"><path d="M0.5 0.5V9L2.5 7.3L4 10.5L5.3 9.9L3.8 6.8H6.5Z" fill="#f0f0f0" stroke="#7aa8cc" stroke-width="0.5"/></svg>
<div class="t" style="transform:scaleX(0.9128);transform-origin:0 0;left:1163.75px;top:259.5px;font-size:9.5px;color:#fff;-webkit-text-stroke:0.15px #fff">3 selected</div>
<svg style="left:1216.5px;top:260px" width="8" height="8" viewBox="0 0 8 8"><path d="M0.7 0.7L7.3 7.3M7.3 0.7L0.7 7.3" stroke="#333" stroke-width="1.3"/></svg>
<!-- dropdowns -->
<div class="inp" style="top:277.5px"></div>
<div class="inp" style="top:301.5px"></div>
<div class="inp" style="top:325.5px"></div>
<div class="inp" style="top:349.5px"></div>
<div class="inp" style="top:373.5px"></div>
<div class="inp" style="top:405.5px"></div>
<svg style="left:1148px;top:280px" width="14" height="16" viewBox="1148 280 14 16"><path d="M1151.7 281.7V293.5" stroke="#111" stroke-width="1.6"/><path d="M1152.5 287.6H1157" stroke="#111" stroke-width="0.9"/><path d="M1159.5 287.6L1156.3 285.7V289.5Z" fill="#111"/></svg>
<div class="t pl" style="transform:scaleX(0.8545);transform-origin:0 0;left:1165.00px;top:284px;color:#333">Profile Plane</div>
<svg style="left:1147px;top:305px" width="16" height="16" viewBox="1147 305 16 16"><path d="M1152.5 308C1155 309.5 1157.5 307.5 1161.5 308.5L1159.5 314C1157 313 1155 314.5 1153 313.5Z" fill="#f2b08e" stroke="#d8906a" stroke-width="0.4"/><path d="M1150 317.5L1155.5 311.5" stroke="#222" stroke-width="0.9"/><path d="M1148.8 319L1149.6 315.8L1152 318Z" fill="#222"/></svg>
<div class="t pl" style="transform:scaleX(0.8750);transform-origin:0 0;left:1165.00px;top:308px;color:#333">One Side</div>
<svg style="left:1147px;top:328px" width="16" height="15" viewBox="1147 328 16 15"><path d="M1149.2 329.5V341.5M1160.6 329.5V341.5" stroke="#111" stroke-width="1.4"/><path d="M1151.5 335.5H1158.3" stroke="#111" stroke-width="0.8"/><path d="M1150.3 335.5L1152.8 334V337ZM1159.5 335.5L1157 334V337Z" fill="#111"/></svg>
<div class="t pl" style="transform:scaleX(0.8919);transform-origin:0 0;left:1165.00px;top:332px;color:#333">Distance</div>
<div class="t pl" style="transform:scaleX(0.8649);transform-origin:0 0;left:1149.00px;top:356px;color:#333">0.00 mm</div>
<div class="t pl" style="transform:scaleX(0.8906);transform-origin:0 0;left:1149.00px;top:380px;color:#333">0.0 deg</div>
<svg style="left:1146px;top:407px" width="18" height="18" viewBox="1146 407 18 18"><path d="M1148.5 411.5C1148.5 410 1150 409.5 1153.5 409.5C1157 409.5 1158.5 410 1158.5 411.5V421.5C1158.5 423 1157 423.5 1153.5 423.5C1150 423.5 1148.5 423 1148.5 421.5Z" fill="#e6e6e6" stroke="#8a8a8a" stroke-width="0.8"/><path d="M1148.5 411.5C1149.5 413 1157.5 413 1158.5 411.5" fill="none" stroke="#9a9a9a" stroke-width="0.6"/><circle cx="1158.3" cy="411" r="2.6" fill="#f5b021"/></svg>
<div class="t pl" style="transform:scaleX(0.9205);transform-origin:0 0;left:1165.00px;top:412px;color:#333">New Body</div>
<div class="a" style="left:1242px;top:286.5px;width:0;height:0;border-left:2.5px solid transparent;border-right:2.5px solid transparent;border-top:3px solid #222"></div>
<div class="a" style="left:1242px;top:310.5px;width:0;height:0;border-left:2.5px solid transparent;border-right:2.5px solid transparent;border-top:3px solid #222"></div>
<div class="a" style="left:1242px;top:334.5px;width:0;height:0;border-left:2.5px solid transparent;border-right:2.5px solid transparent;border-top:3px solid #222"></div>
<div class="a" style="left:1242px;top:414.5px;width:0;height:0;border-left:2.5px solid transparent;border-right:2.5px solid transparent;border-top:3px solid #222"></div>
<div class="a" style="left:1079px;top:400px;width:187px;height:1px;background:#d9d9d9"></div>
<div class="a" style="left:1078px;top:429px;width:199px;height:1px;background:#dcdcdc"></div>
<svg style="left:1085px;top:439px" width="9" height="9" viewBox="0 0 9 9"><circle cx="4.5" cy="4.5" r="4.4" fill="#111"/><rect x="3.8" y="3.6" width="1.5" height="3.8" fill="#fff"/><circle cx="4.5" cy="2.2" r="0.85" fill="#fff"/></svg>
<div class="a" style="left:1164px;top:436px;width:47.5px;height:14.5px;background:#e6e6e6;border:1px solid #d0d0d0"></div>
<div class="t" style="left:1181px;top:439px;font-size:9.5px;color:#c4c4c4">OK</div>
<div class="a" style="left:1220px;top:436px;width:47.5px;height:14.5px;background:#ececec;border:1px solid #c8c8c8"></div>
<div class="t" style="transform:scaleX(1.0586);transform-origin:0 0;left:1228.30px;top:439px;font-size:9.5px;color:#444">Cancel</div>

<!-- comments -->
<div class="a" style="left:4px;top:608px;width:240px;height:20px;background:#efefef;border:1px solid #dadada"></div>
<div class="t" style="transform:scaleX(0.8769);transform-origin:0 0;left:23.90px;top:613.5px;font-size:9px;color:#777">COMMENTS</div>
<svg style="left:226px;top:613.5px" width="9" height="9" viewBox="0 0 9 9"><circle cx="4.5" cy="4.5" r="4.3" fill="#1a1a1a"/><path d="M2 4.5H7M4.5 2V7" stroke="#fff" stroke-width="1.3"/></svg>
<!-- nav bar -->
<div class="a" style="left:546px;top:607px;width:190px;height:19.5px;background:#efefef"></div>
<svg style="left:546px;top:607px" width="192" height="20" viewBox="546 607 192 20">
<!-- orbit -->
<path d="M555.3 623.5V612" stroke="#444" stroke-width="1.3"/><path d="M552.8 613.5L555.3 609.8L557.8 613.5Z" fill="#444"/>
<path d="M551.5 620C549 619 548.8 617 551 616C553.5 615 558.5 615 560.5 616.3C562 617.3 561 619.5 557 620.2" fill="none" stroke="#444" stroke-width="1.1"/>
<path d="M549 620.8L552.5 618.3L552.8 622Z" fill="#444"/>
<path d="M565.8 615.8H570L567.9 618.5Z" fill="#222"/>
<!-- look at -->
<rect x="575.2" y="613.8" width="12.6" height="8.7" rx="1.5" fill="#f2f2f2" stroke="#555" stroke-width="1"/><rect x="577.7" y="616.6" width="7.6" height="3.4" fill="#9a9a9a" stroke="#666" stroke-width="0.5"/><path d="M578 612.2H584.5M583 611L584.7 612.2L583 613.4" fill="none" stroke="#555" stroke-width="0.7"/>
<!-- pan hand -->
<path d="M599.5 623.2C598 621.8 596.5 619.8 596.2 618.6C596 617.8 596.8 617.3 597.6 617.8L599 619V612.3C599 611.3 600.5 611.3 600.5 612.3V616.5V611.2C600.5 610.2 602.1 610.2 602.1 611.2V616.5V611.8C602.1 610.8 603.7 610.8 603.7 611.8V616.8V613C603.7 612 605.3 612 605.3 613V619C605.3 621.5 604.2 623.2 602 623.2Z" fill="#fafafa" stroke="#444" stroke-width="0.9" stroke-linejoin="round"/>
<!-- zoom -->
<circle cx="620.2" cy="616.8" r="3.9" fill="#fbfbfb" stroke="#444" stroke-width="1.1"/><path d="M623 619.6L626.2 622.8" stroke="#333" stroke-width="2"/><path d="M626.8 610V614M624.8 612H628.8M625 615.6H629" stroke="#444" stroke-width="0.8"/>
<!-- fit -->
<circle cx="642.3" cy="616.3" r="4.6" fill="#fbfbfb" stroke="#444" stroke-width="1.1"/><path d="M645.6 619.6L648.6 622.6" stroke="#333" stroke-width="2"/><path d="M638 622.8H645M649.8 610.5V618M638 610H646" stroke="#888" stroke-width="0.6" stroke-dasharray="1 1"/>
<path d="M654.8 615.8H659L656.9 618.5Z" fill="#222"/>
<!-- display -->
<rect x="664.5" y="610.2" width="12.5" height="10" rx="1" fill="#9ab6dc" stroke="#6a6a6a" stroke-width="1"/><rect x="666.3" y="611.8" width="9" height="6.8" fill="#a9c3e6" stroke="#5a7fb0" stroke-width="0.4"/><path d="M668.5 621.8H673M670.75 620.2V621.8" stroke="#666" stroke-width="1"/>
<path d="M679 615.8H683.2L681.1 618.5Z" fill="#222"/>
<!-- grid -->
<rect x="688.6" y="610.3" width="12.8" height="12.6" fill="#e6e6e6" stroke="#777" stroke-width="0.7"/>
<path d="M690.7 610.3V622.9M692.8 610.3V622.9M694.9 610.3V622.9M697 610.3V622.9M699.2 610.3V622.9M688.6 612.4H701.4M688.6 614.5H701.4M688.6 616.6H701.4M688.6 618.7H701.4M688.6 620.8H701.4" stroke="#8a8a8a" stroke-width="0.55"/>
<path d="M703.4 615.8H707.6L705.5 618.5Z" fill="#222"/>
<!-- viewports -->
<rect x="713.2" y="610.8" width="12.6" height="11.8" rx="1" fill="#dfe6f0" stroke="#6a7fa8" stroke-width="0.6"/>
<rect x="714.3" y="611.9" width="4.9" height="4.5" fill="#8aa5d2"/><rect x="719.9" y="611.9" width="4.9" height="4.5" fill="#8aa5d2"/><rect x="714.3" y="617.1" width="4.9" height="4.5" fill="#8aa5d2"/><rect x="719.9" y="617.1" width="4.9" height="4.5" fill="#8aa5d2"/>
<path d="M728.4 615.8H732.6L730.5 618.5Z" fill="#222"/>
</svg>
<div class="t" style="transform:scaleX(0.9535);transform-origin:0 0;left:1205.02px;top:614px;font-size:9.5px;font-weight:bold;color:#333">3 Profiles</div>
<svg style="left:1256px;top:610px" width="16" height="16" viewBox="1256 610 16 16"><path d="M1264.3 612.6A5.4 5.4 0 1 0 1264.3 623.4H1270V618A5.4 5.4 0 0 0 1264.3 612.6Z" fill="#111"/><path d="M1260.6 621.2C1261.2 618 1263.8 616.6 1266.8 617.3V620.2" fill="none" stroke="#fff" stroke-width="1.4"/></svg>
<!-- timeline -->
<div class="a" style="left:0;top:631px;width:1280px;height:89px;background:#f2f2f2;border-top:1px solid #dcdcdc"></div>
<div class="a" style="left:0;top:671px;width:1280px;height:1px;background:#d0d0d0"></div>
<div class="a" style="left:0;top:26px;width:1.2px;height:662px;background:#9c9c9c"></div>
<!-- watermark -->
<svg style="left:1030px;top:631px" width="250" height="89" viewBox="1030 631 250 89">
<g fill="#fbfbfb" opacity="0.9">
<path d="M1095 632H1107L1085.8 681.5H1038.75V672H1075.5Z"/>
<path d="M1135.6 632H1146L1130 672H1148V681.5H1113Z"/>
<path d="M1151.4 681.5L1171 632H1182L1181.5 681.5H1171.7L1171.5 660L1163 681.5Z"/>
<path d="M1186 681.5L1204.6 632H1215.6L1216 652L1221 632H1231L1214.4 681.5H1203.5L1203 660L1197 681.5Z"/>
<path d="M1236 632H1267.5L1264 641H1261.4L1245 681.5H1232.5L1249.4 641H1233Z"/>
</g>
<g fill="none" stroke="#fbfbfb" stroke-width="5.5" opacity="0.9">
<path d="M1197 691H1218Q1223 691 1223 695.5V696Q1223 700.5 1218 700.5H1205M1218 700.5Q1223 700.5 1223 705V706Q1223 710.5 1218 710.5H1197"/>
<path d="M1243 691H1258Q1266 691 1266 699V702.5Q1266 710.5 1258 710.5H1243Z"/>
</g>
</svg>
<svg style="left:8px;top:644px" width="95" height="14" viewBox="0 0 95 14">
<path d="M1.5 1.5V12.5" stroke="#333" stroke-width="1.4"/><path d="M11 1.5V12.5L3 7Z" fill="#333"/>
<path d="M21 7L28 2V12Z" fill="#333"/><path d="M29.5 4.5V9.5" stroke="#333" stroke-width="1.2"/>
<path d="M41.5 1.5V12.5L50 7Z" fill="#333"/>
<path d="M61.5 4.5V9.5" stroke="#333" stroke-width="1.2"/><path d="M62.5 2V12L69.5 7Z" fill="#333"/>
<path d="M81 1.5V12.5L89 7Z" fill="#333"/><path d="M90.5 1.5V12.5" stroke="#333" stroke-width="1.4"/>
</svg>
<svg style="left:115px;top:640px" width="240" height="28" viewBox="115 640 240 28">
<path d="M124 664H336" stroke="#cfcfcf" stroke-width="1.3"/>
<path d="M124 660.5V664M143 660.5V664M162 660.5V664M181 660.5V664M201 660.5V664M220 660.5V664M239 660.5V664M258 660.5V664M277 660.5V664M297 660.5V664M316 660.5V664M336 660.5V664" stroke="#cfcfcf" stroke-width="1"/>
<!-- sketch1 -->
<g><path d="M118.5 646.5H129.5M118.5 646.5V656.5H124" fill="none" stroke="#333" stroke-width="0.7" stroke-dasharray="1.5 1"/><path d="M129.5 646.5V652" stroke="#333" stroke-width="0.7" stroke-dasharray="1.5 1"/><rect x="118" y="646" width="1.5" height="1.5" fill="#2a6fc0"/><rect x="129" y="646" width="1.5" height="1.5" fill="#2a6fc0"/><rect x="118" y="656" width="1.5" height="1.5" fill="#2a6fc0"/><path d="M125 656L130.5 650.5" stroke="#f0a030" stroke-width="2"/></g>
<!-- extrude -->
<g><path d="M137 648.5L139 646H147V655L145 657H137Z" fill="#5aa7e8"/><path d="M137 648.5L139 646H147L145 648.5Z" fill="#8fcaf6"/><path d="M145 648.5L147 646V655L145 657Z" fill="#3a85ce"/><path d="M149.5 657V646" stroke="#333" stroke-width="0.8"/></g>
<!-- sketch2 -->
<g><path d="M156.5 646.5H167.5M156.5 646.5V656.5H162" fill="none" stroke="#333" stroke-width="0.7" stroke-dasharray="1.5 1"/><path d="M167.5 646.5V652" stroke="#333" stroke-width="0.7" stroke-dasharray="1.5 1"/><rect x="156" y="646" width="1.5" height="1.5" fill="#2a6fc0"/><rect x="166" y="646" width="1.5" height="1.5" fill="#2a6fc0"/><rect x="156" y="656" width="1.5" height="1.5" fill="#2a6fc0"/><path d="M163 656L168.5 650.5" stroke="#f0a030" stroke-width="2"/></g>
<!-- faded items -->
<g opacity="0.35"><path d="M175 648.5L177 646H185V655L183 657H175Z" fill="#9ec7ea"/><path d="M187.5 657V646" stroke="#777" stroke-width="0.8"/>
<path d="M194 648.5L196 646H204V655L202 657H194Z" fill="#9ec7ea"/><path d="M206.5 657V646" stroke="#777" stroke-width="0.8"/></g>
<g fill="#ececec" stroke="#d9d9d9" stroke-width="0.8">
<path d="M213.5 646C213.5 644.5 215 643.7 217 643.7H220.5L225.5 648.5V653C225.5 655.3 224 656.3 222 656.3H216.5C214.5 656.3 213.5 655 213.5 653Z"/>
<path d="M233.5 646C233.5 644.5 235 643.7 237 643.7H240.5L245.5 648.5V653C245.5 655.3 244 656.3 242 656.3H236.5C234.5 656.3 233.5 655 233.5 653Z"/>
<path d="M252.1 646C252.1 644.5 253.6 643.7 255.6 643.7H259.1L264.1 648.5V653C264.1 655.3 262.6 656.3 260.6 656.3H255.1C253.1 656.3 252.1 655 252.1 653Z"/>
<path d="M271.5 646C271.5 644.5 273 643.7 275 643.7H278.5L283.5 648.5V653C283.5 655.3 282 656.3 280 656.3H274.5C272.5 656.3 271.5 655 271.5 653Z"/>
<path d="M290.5 646C290.5 644.5 292 643.7 294 643.7H297.5L302.5 648.5V653C302.5 655.3 301 656.3 299 656.3H293.5C291.5 656.3 290.5 655 290.5 653Z"/>
<path d="M309.5 646C309.5 644.5 311 643.7 313 643.7H316.5L321.5 648.5V653C321.5 655.3 320 656.3 318 656.3H312.5C310.5 656.3 309.5 655 309.5 653Z"/>
</g>
<path d="M235 651C236 647.5 238 646.5 241 646.5" fill="none" stroke="#dcdcdc" stroke-width="1.8"/>
<!-- active sketch3 -->
<rect x="325.6" y="641.2" width="18" height="18.8" rx="1.5" fill="#0e8ad8"/>
<path d="M331 655L335 651" stroke="#e8c050" stroke-width="1.6"/>
<path d="M344.4 643V665" stroke="#333" stroke-width="1.6"/><path d="M339.7 639.4H350L346 646.3H343Z" fill="#666"/>
</svg>
<svg style="left:1256px;top:644px" width="16" height="16" viewBox="0 0 16 16"><circle cx="7.8" cy="7.2" r="5.4" fill="none" stroke="#8e8e8e" stroke-width="2.2" stroke-dasharray="2.3 1.94" transform="rotate(-12 7.8 7.2)"/><circle cx="7.8" cy="7.2" r="3.3" fill="none" stroke="#8e8e8e" stroke-width="2.4"/></svg>
<svg style="left:5px;top:676px" width="9" height="9" viewBox="0 0 9 9"><circle cx="4.5" cy="4.5" r="4.3" fill="#1a1a1a"/><path d="M2 4.5H7M4.5 2V7" stroke="#fff" stroke-width="1.3"/></svg>
<div class="t" style="transform:scaleX(0.8949);transform-origin:0 0;left:21.00px;top:677px;font-size:9px;color:#777">TEXT COMMANDS</div>

</body></html>
